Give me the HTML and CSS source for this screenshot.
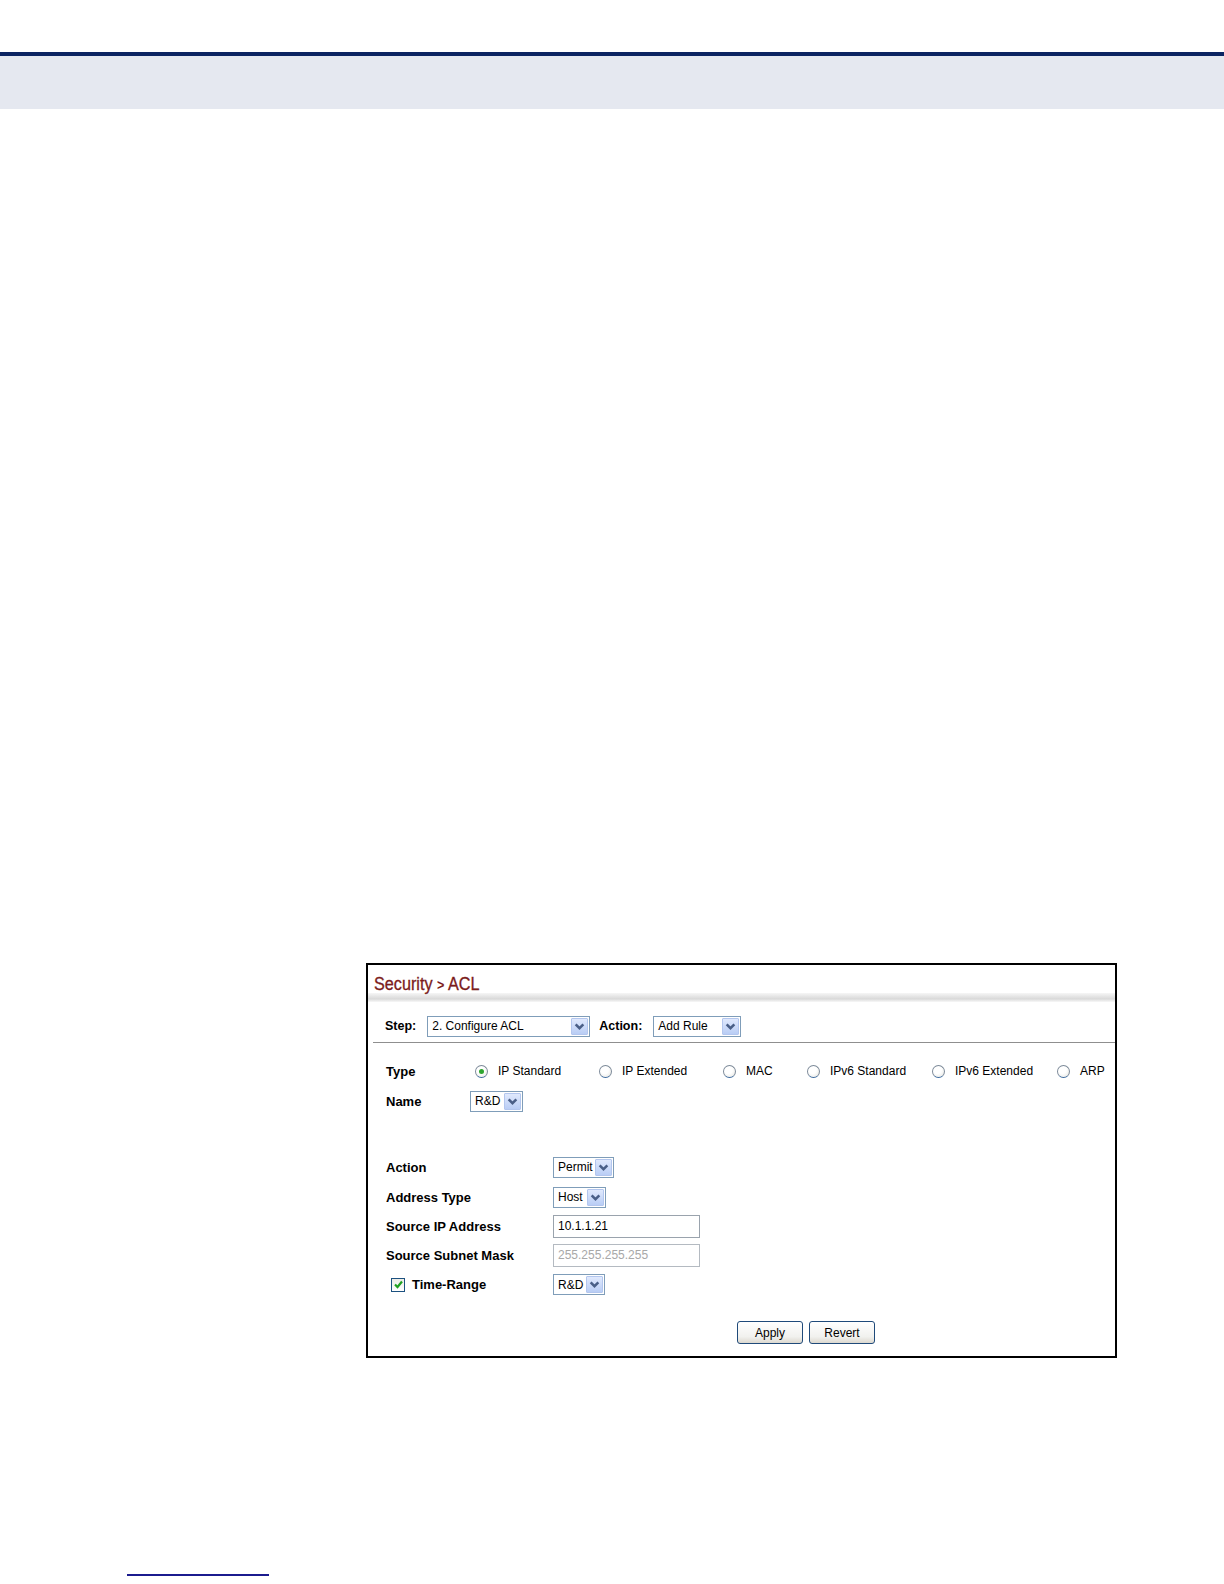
FILE: index.html
```html
<!DOCTYPE html>
<html lang="en">
<head>
<meta charset="utf-8">
<title>Security &gt; ACL</title>
<link rel="stylesheet" href="styles.css">
</head>
<body>
<header class="doc-header">
  <div class="doc-rule"></div>
  <div class="doc-band"></div>
</header>

<main class="page">
  <section class="panel">
    <h1 class="panel-title"><span class="title-text">Security <span class="gt">&gt;</span> ACL</span></h1>
    <div class="title-shade"></div>

    <div class="step-bar">
      <span class="bar-label step-label">Step:</span>
      <div class="select sel-step"><span class="val">2. Configure ACL</span><span class="arrow"><svg viewBox="0 0 10 8" width="11" height="9"><path d="M1.5 2 L5 5.5 L8.5 2" fill="none" stroke="#4a5f87" stroke-width="2.3"/></svg></span></div>
      <span class="bar-label action-label">Action:</span>
      <div class="select sel-action"><span class="val">Add Rule</span><span class="arrow"><svg viewBox="0 0 10 8" width="11" height="9"><path d="M1.5 2 L5 5.5 L8.5 2" fill="none" stroke="#4a5f87" stroke-width="2.3"/></svg></span></div>
    </div>

    <div class="form">
      <div class="row type-row">
        <span class="lbl type-lbl">Type</span>
        <label class="opt w124"><span class="radio checked"></span><span class="opt-text">IP Standard</span></label>
        <label class="opt w124"><span class="radio"></span><span class="opt-text">IP Extended</span></label>
        <label class="opt w84"><span class="radio"></span><span class="opt-text">MAC</span></label>
        <label class="opt w125"><span class="radio"></span><span class="opt-text">IPv6 Standard</span></label>
        <label class="opt w125"><span class="radio"></span><span class="opt-text">IPv6 Extended</span></label>
        <label class="opt"><span class="radio"></span><span class="opt-text">ARP</span></label>
      </div>
      <div class="row name-row">
        <span class="lbl name-lbl">Name</span>
        <div class="select sel-name"><span class="val">R&amp;D</span><span class="arrow"><svg viewBox="0 0 10 8" width="11" height="9"><path d="M1.5 2 L5 5.5 L8.5 2" fill="none" stroke="#4a5f87" stroke-width="2.3"/></svg></span></div>
      </div>

      <div class="rule-group">
        <div class="row grow tall">
          <span class="lbl col-lbl">Action</span>
          <div class="select sel-permit"><span class="val">Permit</span><span class="arrow"><svg viewBox="0 0 10 8" width="11" height="9"><path d="M1.5 2 L5 5.5 L8.5 2" fill="none" stroke="#4a5f87" stroke-width="2.3"/></svg></span></div>
        </div>
        <div class="row grow tall">
          <span class="lbl col-lbl">Address Type</span>
          <div class="select sel-host"><span class="val">Host</span><span class="arrow"><svg viewBox="0 0 10 8" width="11" height="9"><path d="M1.5 2 L5 5.5 L8.5 2" fill="none" stroke="#4a5f87" stroke-width="2.3"/></svg></span></div>
        </div>
        <div class="row grow">
          <span class="lbl col-lbl">Source IP Address</span>
          <div class="text-input">10.1.1.21</div>
        </div>
        <div class="row grow">
          <span class="lbl col-lbl">Source Subnet Mask</span>
          <div class="text-input disabled">255.255.255.255</div>
        </div>
        <div class="row grow">
          <span class="lbl col-lbl check-lbl"><span class="checkbox"><svg viewBox="0 0 11 11" width="11" height="11"><path d="M2 5.5 L4.5 8 L9 2.5" fill="none" stroke="#21a121" stroke-width="2.2"/></svg></span>Time-Range</span>
          <div class="select sel-time"><span class="val">R&amp;D</span><span class="arrow"><svg viewBox="0 0 10 8" width="11" height="9"><path d="M1.5 2 L5 5.5 L8.5 2" fill="none" stroke="#4a5f87" stroke-width="2.3"/></svg></span></div>
        </div>
      </div>

      <div class="buttons">
        <button class="btn btn-apply" type="button">Apply</button>
        <button class="btn" type="button">Revert</button>
      </div>
    </div>
  </section>
</main>

<footer class="doc-footer">
  <div class="foot-line"></div>
</footer>
</body>
</html>
```

FILE: styles.css
```css
html, body {
  margin: 0;
  padding: 0;
  background: #ffffff;
}

body {
  font-family: "Liberation Sans", Arial, sans-serif;
  color: #000;
  width: 1224px;
  min-height: 1584px;
}

.doc-header {
  padding-top: 52px;
}

.doc-rule {
  height: 4px;
  background: #0b2462;
}

.doc-band {
  height: 53px;
  background: #e5e8f0;
}

.page {
  padding-top: 854px;
  padding-left: 366px;
}

.panel {
  width: 747px;
  height: 391px;
  border: 2px solid #000;
  background: #fff;
  display: flex;
  flex-direction: column;
}

.panel-title {
  margin: 0;
  padding: 10px 0 0 6px;
  height: 18px;
  line-height: 18px;
  font-family: "Liberation Sans", Arial, sans-serif;
  font-size: 18px;
  font-weight: normal;
  color: #7b1b1b;
}

.title-text {
  display: inline-block;
  transform: scaleX(0.9);
  transform-origin: left center;
  white-space: nowrap;
  -webkit-text-stroke: 0.3px #7b1b1b;
}

.title-text .gt {
  font-size: 14px;
  font-weight: bold;
  -webkit-text-stroke: 0;
}

.title-shade {
  height: 9px;
  background: linear-gradient(#f6f6f6, #d9d9d9 65%, #f8f8f8);
}

.step-bar {
  display: flex;
  align-items: center;
  height: 32px;
  padding-top: 8px;
  margin-left: 5px;
  padding-left: 12px;
  border-bottom: 1px solid #8f8f8f;
}

.bar-label {
  font-size: 12.5px;
  font-weight: bold;
}

.step-label {
  margin-right: 11px;
}

.action-label {
  margin-left: 9px;
  margin-right: 11px;
}

/* select imitation */
.select {
  box-sizing: border-box;
  height: 21px;
  border: 1px solid #7f9db9;
  background: #fff;
  display: flex;
  align-items: center;
  justify-content: space-between;
  padding: 1px;
}

.select .val {
  font-size: 12px;
  padding-left: 3px;
  white-space: nowrap;
}

.select .arrow {
  box-sizing: border-box;
  width: 17px;
  height: 17px;
  border: 1px solid #b3c6ee;
  border-radius: 1px;
  background: linear-gradient(#e0e9fd, #b9cdf5);
  display: flex;
  align-items: center;
  justify-content: center;
}

.sel-step { width: 163px; }
.sel-action { width: 88px; }
.sel-name { width: 53px; }
.sel-permit { width: 61px; }
.sel-host { width: 53px; }
.sel-time { width: 52px; }

.form {
  padding: 14px 0 0 18px;
  display: flex;
  flex-direction: column;
}

.row {
  display: flex;
  align-items: center;
  height: 28px;
}

.name-row {
  margin-top: 2px;
}

.lbl {
  font-size: 13px;
  font-weight: bold;
  white-space: nowrap;
}

.type-lbl { width: 89px; }
.name-lbl { width: 84px; }

.opt {
  display: flex;
  align-items: center;
  font-size: 12px;
}

.w124 { width: 124px; }
.w84 { width: 84px; }
.w125 { width: 125px; }

.opt-text {
  margin-left: 10px;
  white-space: nowrap;
}

.radio {
  box-sizing: border-box;
  width: 13px;
  height: 13px;
  border-radius: 50%;
  border: 1px solid #7d8a99;
  border-bottom-color: #3d6a9e;
  background: radial-gradient(circle at 40% 35%, #ffffff 40%, #e3e3dd);
  display: flex;
  align-items: center;
  justify-content: center;
}

.radio.checked::after {
  content: "";
  width: 5px;
  height: 5px;
  border-radius: 50%;
  background: #2ea52e;
}

.rule-group {
  margin-top: 37px;
  display: flex;
  flex-direction: column;
}

.grow {
  height: 29px;
}

.grow.tall {
  height: 30px;
}

.col-lbl {
  width: 167px;
}

.check-lbl {
  display: flex;
  align-items: center;
}

.checkbox {
  box-sizing: border-box;
  width: 14px;
  height: 14px;
  margin-left: 5px;
  margin-right: 7px;
  border: 1px solid #1c5180;
  background: linear-gradient(#ecece6, #ffffff);
  display: flex;
  align-items: center;
  justify-content: center;
}

.text-input {
  box-sizing: border-box;
  width: 147px;
  height: 23px;
  border: 1px solid #9aa3ad;
  font-size: 12px;
  line-height: 21px;
  padding-left: 4px;
  background: #fff;
}

.text-input.disabled {
  color: #a8a8a8;
  border-color: #b4bac1;
}

.buttons {
  display: flex;
  gap: 6px;
  margin-top: 22px;
  padding-left: 351px;
}

.btn {
  box-sizing: border-box;
  width: 66px;
  height: 23px;
  border: 1px solid #1f4a7a;
  border-radius: 3px;
  background: linear-gradient(#ffffff, #f1f1ee 70%, #dcd8cf);
  font-family: "Liberation Sans", Arial, sans-serif;
  font-size: 12px;
  color: #000;
  padding: 0;
}

.doc-footer {
  padding-top: 216px;
  padding-left: 127px;
}

.foot-line {
  width: 142px;
  height: 2px;
  background: #1b1b8e;
}
```
